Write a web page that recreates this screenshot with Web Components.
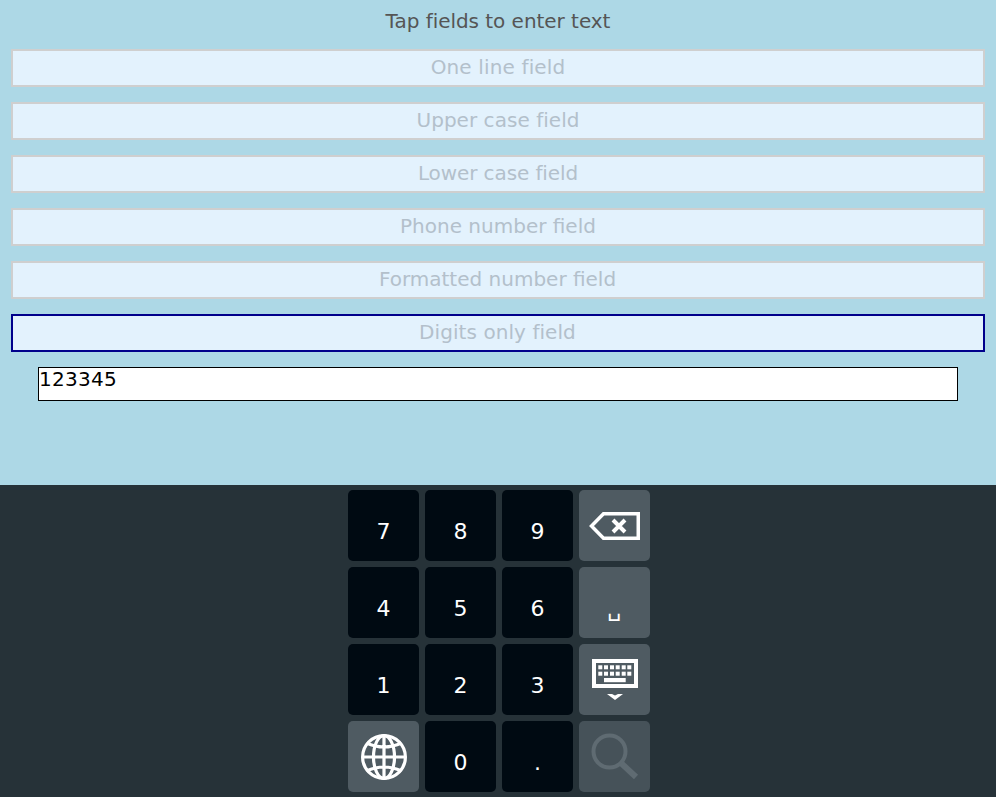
<!DOCTYPE html>
<html>
<head>
<meta charset="utf-8">
<title>Text input</title>
<style>
html, body { margin: 0; height: 100%; }
body { font-family: "DejaVu Sans", sans-serif; }
</style>
</head>
<body>
<input-demo>
  <input-field style="letter-spacing:.14px">One line field</input-field>
  <input-field style="letter-spacing:.04px">Upper case field</input-field>
  <input-field style="letter-spacing:-.1px">Lower case field</input-field>
  <input-field>Phone number field</input-field>
  <input-field style="text-indent:-1px">Formatted number field</input-field>
  <input-field focused style="letter-spacing:.066px;text-indent:-1px">Digits only field</input-field>
  <typed-value slot="value">123345</typed-value>
  <key-pad slot="keyboard">
    <key-cap>7</key-cap><key-cap>8</key-cap><key-cap>9</key-cap>
    <key-cap special><svg width="51" height="28" viewBox="0 0 51 28" fill="none"><path d="M49.250 1.750H14.500L2.500 14 14.500 26.250H49.250Z" stroke="#fff" stroke-width="3.500"/><path d="M24 8 36 20M36 8 24 20" stroke="#fff" stroke-width="4"/></svg></key-cap>
    <key-cap>4</key-cap><key-cap>5</key-cap><key-cap>6</key-cap>
    <key-cap special low>␣</key-cap>
    <key-cap>1</key-cap><key-cap>2</key-cap><key-cap>3</key-cap>
    <key-cap special><svg width="46" height="41" viewBox="0 0 46 41"><path d="M0 0H46V29H0Z M4 4V25H42V4Z" fill="#fff" fill-rule="evenodd"/><g fill="#fff"><rect x="6.300" y="6.300" width="4" height="4"/><rect x="12" y="6.300" width="4" height="4"/><rect x="18" y="6.300" width="4" height="4"/><rect x="23.700" y="6.300" width="4" height="4"/><rect x="29.700" y="6.300" width="4" height="4"/><rect x="35.300" y="6.300" width="4" height="4"/><rect x="6.300" y="12.700" width="4" height="4"/><rect x="12" y="12.700" width="4" height="4"/><rect x="18" y="12.700" width="4" height="4"/><rect x="23.700" y="12.700" width="4" height="4"/><rect x="29.700" y="12.700" width="4" height="4"/><rect x="35.300" y="12.700" width="4" height="4"/><rect x="12" y="19" width="21.700" height="4.200"/><path d="M15 35H20L23 36.500 26 35H31L23 41Z"/></g></svg></key-cap>
    <key-cap special><svg width="46" height="46" viewBox="0 0 46 46" fill="none" stroke="#fff" stroke-width="3.200"><circle cx="23" cy="23" r="21.400"/><ellipse cx="23" cy="23" rx="10.500" ry="21.400"/><path d="M23 1.600V44.400M1.600 23H44.400M5.500 9Q23 17 40.500 9M5.500 37Q23 29 40.500 37"/></svg></key-cap>
    <key-cap>0</key-cap><key-cap>.</key-cap>
    <key-cap special disabled><svg width="48" height="48" viewBox="0 0 48 48" fill="none" stroke="#5f6b72"><circle cx="18.500" cy="18.500" r="16" stroke-width="4"/><path d="M30 30 45 44" stroke-width="6"/></svg></key-cap>
  </key-pad>
</input-demo>
<script>
// Page layout: form on top, keyboard docked at the bottom
const demo_template = document.createElement('template');
demo_template.innerHTML = `
<style>
:host{
  display: flex;
  flex-direction: column;
  height: 797px;
}
#form{
  height: 485px;
  box-sizing: border-box;
  background-color: #add8e6;
  padding: 0 11px;
  overflow: hidden;
}
h1{
  margin: 0;
  height: 42px;
  line-height: 42px;
  font-size: 20px;
  font-weight: normal;
  letter-spacing: -.04px;
  text-align: center;
  color: #555;
}
#fields{
  display: flex;
  flex-direction: column;
  gap: 15px;
  padding-top: 7px;
}
#value{
  display: block;
  margin: 15px 27px 0;
}
#keyboard{
  flex: 1;
  background-color: #263238;
}
</style>
<section id="form">
  <h1>Tap fields to enter text</h1>
  <div id="fields"><slot></slot></div>
  <div id="value"><slot name="value"></slot></div>
</section>
<div id="keyboard"><slot name="keyboard"></slot></div>`;

class inputDemo extends HTMLElement{
  constructor(){
    super();
    this.attachShadow({mode:"open"});
    this.shadowRoot.appendChild(demo_template.content.cloneNode(true));
  }
}

// One tappable text field with its placeholder
const field_template = document.createElement('template');
field_template.innerHTML = `
<style>
:host{
  display: block;
  box-sizing: border-box;
  height: 38px;
  line-height: 33px;
  border: 2px solid #cfcfcf;
  background-color: #e3f2fd;
  color: #b3c0cb;
  font-size: 20px;
  text-align: center;
}
:host([focused]){
  border-color: #00008b;
}
</style>
<slot></slot>`;

class inputField extends HTMLElement{
  constructor(){
    super();
    this.attachShadow({mode:"open"});
    this.shadowRoot.appendChild(field_template.content.cloneNode(true));
  }
}

// The text being typed, shown above the keyboard
const value_template = document.createElement('template');
value_template.innerHTML = `
<style>
:host{
  display: block;
  box-sizing: border-box;
  height: 34px;
  border: 1px solid #000;
  background-color: #fff;
  color: #000;
  font-size: 20px;
  letter-spacing: .28px;
  line-height: 22px;
}
</style>
<slot></slot>`;

class typedValue extends HTMLElement{
  constructor(){
    super();
    this.attachShadow({mode:"open"});
    this.shadowRoot.appendChild(value_template.content.cloneNode(true));
  }
}

// Grid of keys
const pad_template = document.createElement('template');
pad_template.innerHTML = `
<style>
:host{
  display: grid;
  grid-template-columns: repeat(4, 71px);
  grid-auto-rows: 71px;
  gap: 6px;
  justify-content: center;
  padding: 5px 0 0 2px;
}
</style>
<slot></slot>`;

class keyPad extends HTMLElement{
  constructor(){
    super();
    this.attachShadow({mode:"open"});
    this.shadowRoot.appendChild(pad_template.content.cloneNode(true));
  }
}

const key_template = document.createElement('template');
key_template.innerHTML = `
<style>
:host{
  display: flex;
  align-items: center;
  justify-content: center;
  border-radius: 5px;
  background-color: #000a12;
  color: #fff;
  font-size: 22px;
  line-height: 26px;
  padding-top: 13px;
  box-sizing: border-box;
}
:host([special]){
  background-color: #4f5b62;
  padding-top: 0;
}
:host([low]){
  padding-top: 13px;
}
:host([disabled]){
  background-color: #465259;
}
</style>
<slot></slot>`;

class keyCap extends HTMLElement{
  constructor(){
    super();
    this.attachShadow({mode:"open"});
    this.shadowRoot.appendChild(key_template.content.cloneNode(true));
  }
}

customElements.define("input-demo", inputDemo);
customElements.define("input-field", inputField);
customElements.define("typed-value", typedValue);
customElements.define("key-pad", keyPad);
customElements.define("key-cap", keyCap);
</script>
</body>
</html>
